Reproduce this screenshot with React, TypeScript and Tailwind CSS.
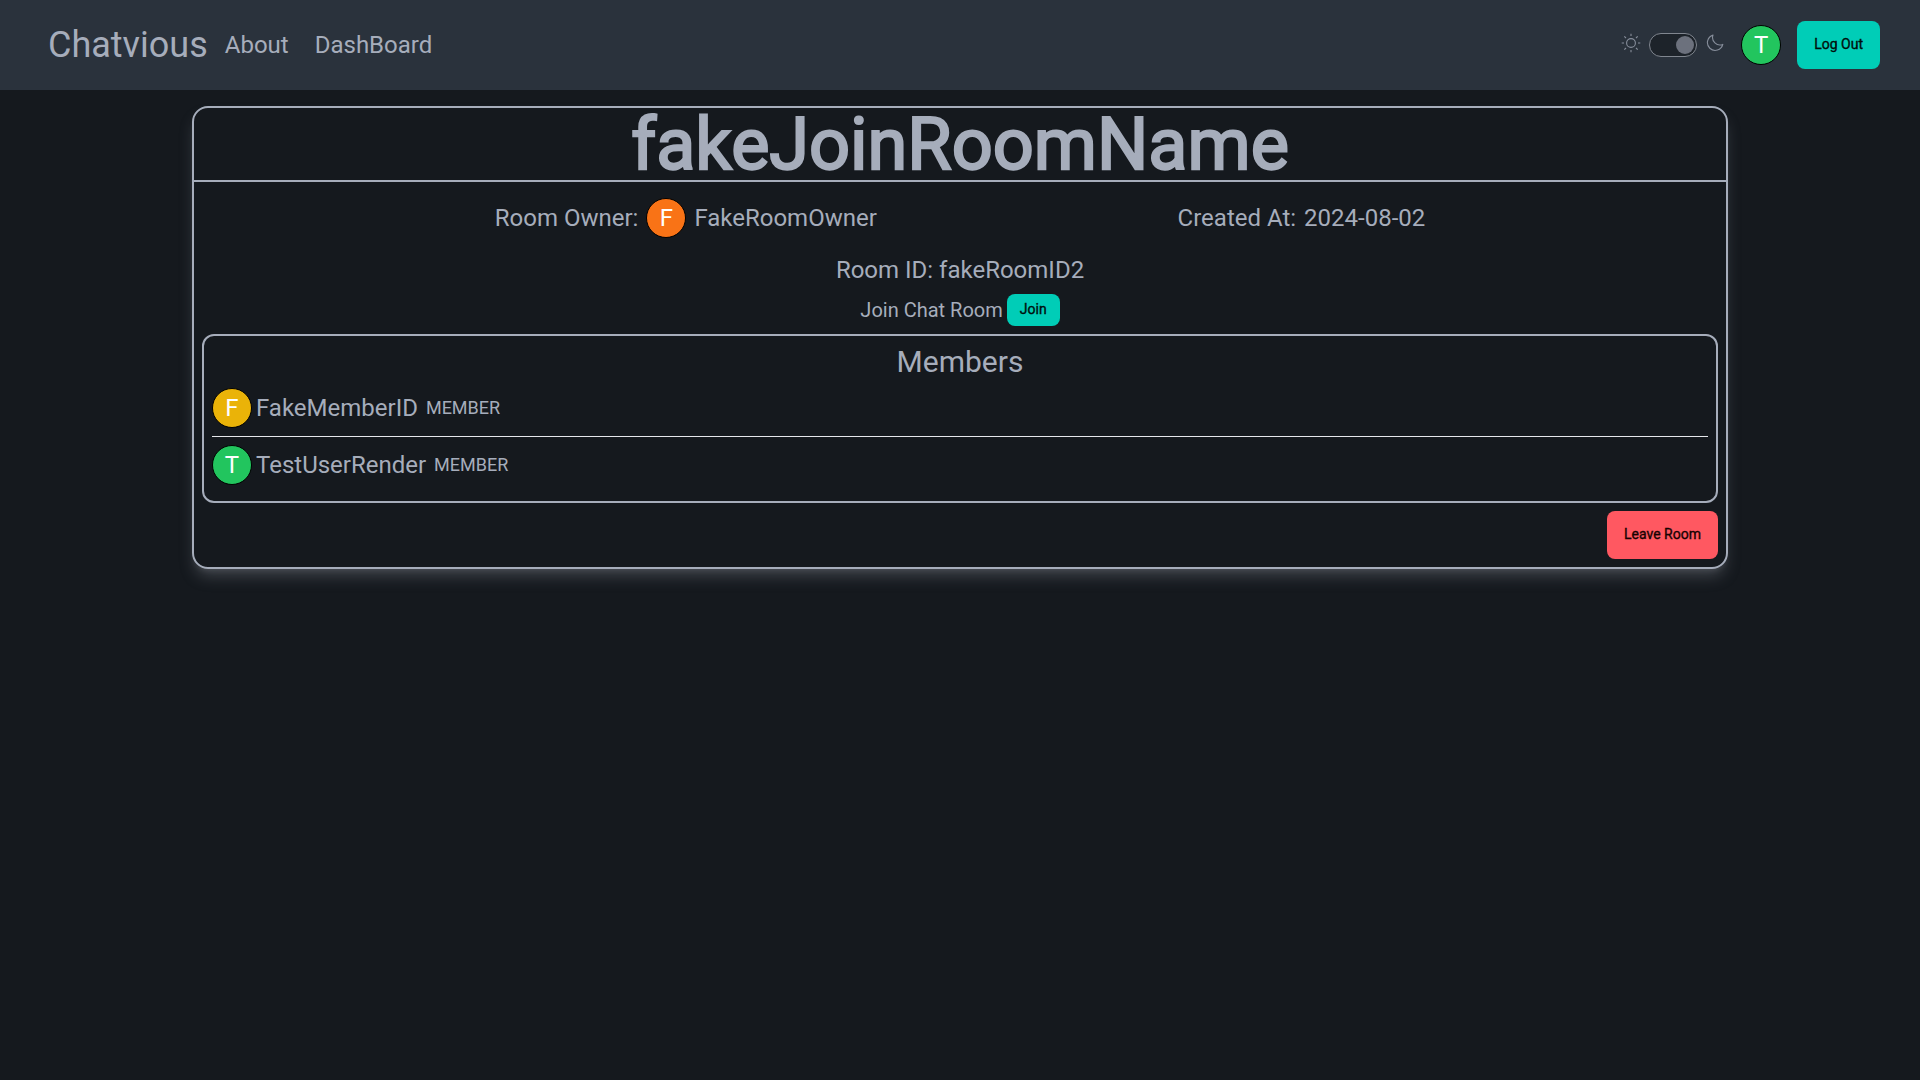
function SunIcon() {
  return (
    <svg viewBox="-10 -10 20 20" className="mr-2 mb-1 size-5 opacity-75" fill="none" stroke="currentColor" strokeWidth="1.1">
      <circle r="4.4" />
      <path d="M0-9.3V-7M0 7V9.3M-9.3 0H-7M7 0H9.3M-6.7-6.7L-5-5M5 5L6.7 6.7M-6.7 6.7L-5 5M5-5L6.7-6.7" />
    </svg>
  );
}

function MoonIcon() {
  return (
    <svg viewBox="-10 -10 20 20" className="mb-1 ml-2 size-5 opacity-75" fill="none" stroke="currentColor" strokeWidth="1.1" strokeLinejoin="round">
      <path d="M-2-7.9A7.8 7.8 0 1 0 7.8 1.4A7.4 7.4 0 0 1-2-7.9Z" />
    </svg>
  );
}

function Avatar({ letter, color }: { letter: string; color: string }) {
  return (
    <div className={`flex size-10 shrink-0 items-center justify-center rounded-full border border-black text-2xl text-white ${color}`}>
      {letter}
    </div>
  );
}

function Member({ name, letter, color }: { name: string; letter: string; color: string }) {
  return (
    <li className="flex items-center">
      <Avatar letter={letter} color={color} />
      <span className="ml-1 text-2xl">{name}</span>
      <span className="ml-2 text-lg">MEMBER</span>
    </li>
  );
}

export default function App() {
  return (
    <div className="min-h-screen bg-[#15191e] font-['Roboto',sans-serif] text-[#a6adbb]">
      <nav className="flex h-[90px] items-center justify-between bg-[#2a323c] pr-10 pl-12">
        <div className="flex items-center">
          <span className="text-4xl">Chatvious</span>
          <span className="ml-[17px] text-2xl">About</span>
          <span className="ml-[26px] text-2xl">DashBoard</span>
        </div>
        <div className="flex items-center">
          <SunIcon />
          <div className="flex h-6 w-12 items-center justify-end rounded-full border border-[#80868f] bg-[#1d232a] px-0.5">
            <div className="size-[18px] rounded-full bg-[#6c717d]" />
          </div>
          <MoonIcon />
          <div className="ml-4">
            <Avatar letter="T" color="bg-[#22c55e]" />
          </div>
          <button className="ml-4 h-12 rounded-lg bg-[#00cdb7] px-[17px] pb-0.5 text-sm text-[#000f0c] [-webkit-text-stroke:0.35px]">Log Out</button>
        </div>
      </nav>

      <main className="mx-auto mt-4 w-4/5 rounded-2xl border-2 border-[#a6adbb] shadow-lg shadow-[#72767f]/45">
        <h1 className="border-b-2 border-[#a6adbb] pt-0.5 text-center text-7xl leading-[70px] [-webkit-text-stroke:2.25px]">fakeJoinRoomName</h1>
        <div className="mt-4 flex items-center justify-evenly text-2xl">
          <div className="flex items-center">
            <span className="mr-2">Room Owner:</span>
            <Avatar letter="F" color="bg-[#f97316]" />
            <span className="ml-2">FakeRoomOwner</span>
          </div>
          <div className="flex gap-2">
            <span>Created At:</span>
            <span>2024-08-02</span>
          </div>
        </div>
        <p className="mt-4 text-center text-2xl">Room ID: fakeRoomID2</p>
        <div className="mt-2 flex items-center justify-center">
          <span className="mr-1 text-xl">Join Chat Room</span>
          <button className="h-8 rounded-lg bg-[#00cdb7] px-[13px] pb-0.5 text-sm text-[#000f0c] [-webkit-text-stroke:0.35px]">Join</button>
        </div>
        <section className="m-2 rounded-xl border-2 border-[#a6adbb] p-2">
          <h2 className="text-center text-3xl">Members</h2>
          <ul className="my-2">
            <Member name="FakeMemberID" letter="F" color="bg-[#eab308]" />
            <li className="my-2 h-px bg-[#e5e7eb]" />
            <Member name="TestUserRender" letter="T" color="bg-[#22c55e]" />
          </ul>
        </section>
        <div className="m-2 flex justify-end">
          <button className="h-12 rounded-lg bg-[#ff5861] px-[17px] pb-0.5 text-sm text-[#160202] [-webkit-text-stroke:0.35px]">Leave Room</button>
        </div>
      </main>
    </div>
  );
}
